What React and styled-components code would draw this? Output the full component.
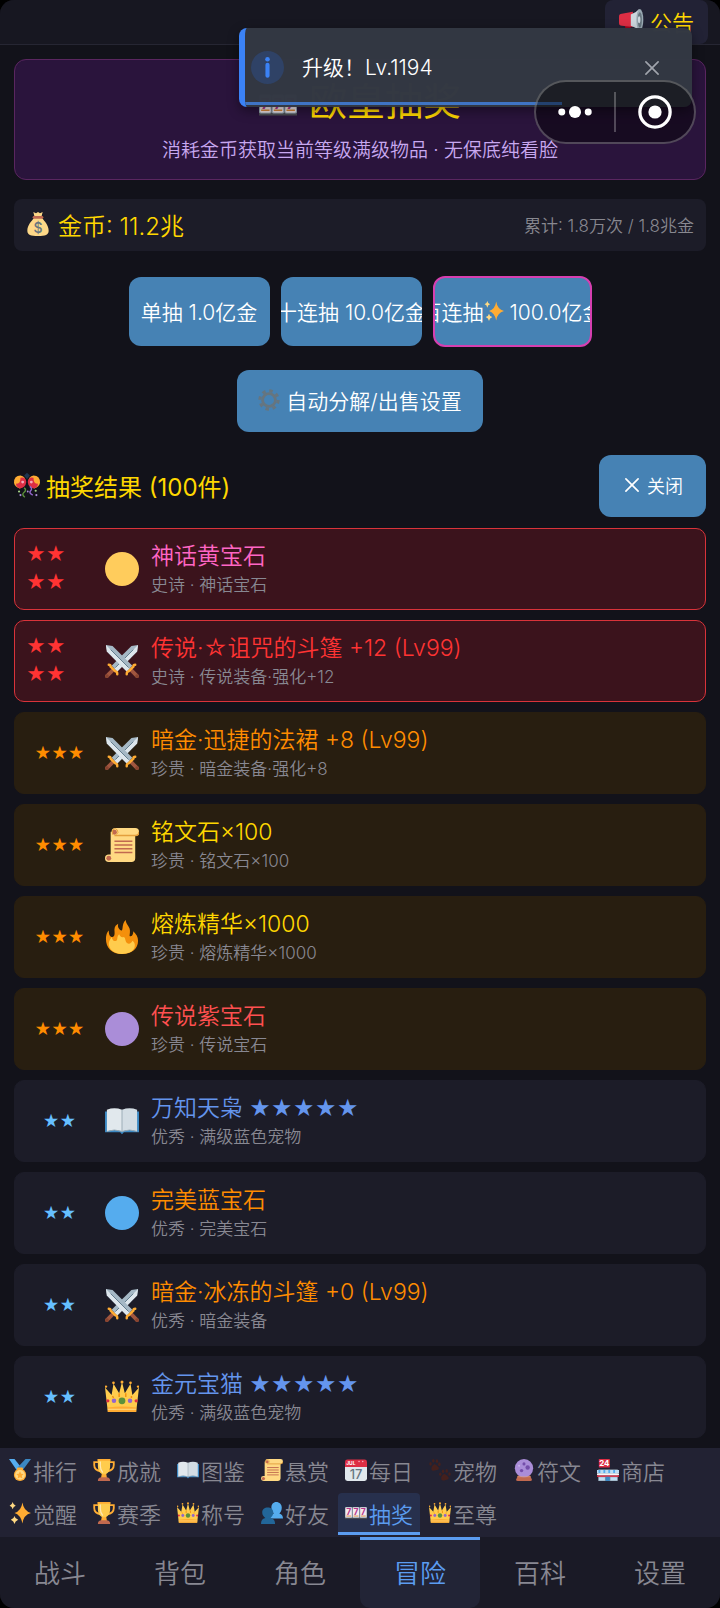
import React from "react";
import styled, { createGlobalStyle, css } from "styled-components";


const GlobalStyle = createGlobalStyle`
 *{
     box-sizing: border-box;
 }
 body{
     margin: 0;
     background: #000;
     color: #fff;
     font-family: Inter, "Noto Sans CJK SC", sans-serif;
     font-weight: 350;
 }
 button{
     font: inherit;
     color: inherit;
     border: 0;
     margin: 0;
     padding: 0;
     background: none;
     cursor: pointer;
 }
`

const sword = <>
    <path d="M1 1l7 1 21 21-6 6L2 8z" fill="#a5b8c5" />
    <path d="M1 1l1 7 21 21 3-3z" fill="#dde6ec" />
    <path d="M6 6l19 19" stroke="#5d7889" strokeWidth="1" />
    <path d="M28 28l6 6" stroke="#a0563f" strokeWidth="4" strokeLinecap="round" />
    <path d="M23 32q0-3 2-3l5-5q0-2 2-2" fill="none" stroke="#ffac33" strokeWidth="2.600" strokeLinecap="round" />
    <circle cx="34" cy="34" r="2" fill="#87432f" />
</>

const cards = [1, 13, 25]

const drawings = {
    swords: <>
        <g transform="translate(36 0) scale(-1 1)">{sword}</g>
        <g>{sword}</g>
    </>,
    scroll: <>
        <path d="M7 4q0-4 4-4h21q4 0 4 4t-4 4v24q0 4-4 4H4q-4 0-4-4t4-4h2V4z" fill="#ffd983" />
        <path d="M10 8h22q4 0 4-4" fill="none" stroke="#e39f3d" strokeWidth="1.500" />
        <circle cx="10" cy="4.500" r="2.600" fill="#c1694f" />
        <path d="M8 7V2q3-3 5 0t-1 5" fill="none" stroke="#e39f3d" />
        <circle cx="4" cy="32" r="2.600" fill="#c1694f" />
        <path d="M10 14h19M10 18h19M10 22h19M10 26h19" stroke="#c1694f" strokeWidth="1.500" />
    </>,
    fire: <>
        <path d="M18 36C7 36 1 29 1 20c0-4 1-7 3-9 0 4 1 7 4 7 3-1 2-5 2-8 0-3 2-5 4-6-1 4 1 6 3 7C20 12 17 4 22 0c0 4 3 6 4 9s0 6 0 8c2 1 4-1 4-5 3 3 5 6 5 10 0 8-6 14-17 14z" fill="#f4900c" />
        <path d="M18 36C9 36 4 31 4 25c0-3 2-5 3-7 1 4 3 5 5 4 2-2 0-4 3-7 1 2 2 4 5 3 2 1 1 4 3 6 2 2 5 1 6-2 3 2 3 5 2 8-2 4-7 6-13 6z" fill="#ffcc4d" />
    </>,
    book: <>
        <path d="M0 8h3l14 3h2l14-3h3v22H20l-2 2-2-2H0z" fill="#3b88c3" />
        <path d="M2 6q8-3 16 0v23q-8-3-16 0z" fill="#e1e8ed" />
        <path d="M34 6q-8-3-16 0v23q8-3 16 0z" fill="#d3dde4" />
        <path d="M18 6v23M2 29q8-3 16 0 8-3 16 0" fill="none" stroke="#99aab5" />
    </>,
    crown: <>
        <path d="M3 34L0 8l7 8 2-12 6 10 3-12 3 12 6-10 2 12 7-8-3 26z" fill="#ffcc4d" />
        <path d="M3 29q15-2 30 0v5H3z" fill="#ffac33" />
        <path d="M3 31h30" stroke="#ffe08a" />
        <path d="M8 17l1 2M15 14v4M22 14v4M28 17v2" stroke="#f4900c" strokeWidth="1.500" />
        <g fill="#ffac33"><circle cx="1" cy="7" r="1.300" /><circle cx="9" cy="3" r="1.400" /><circle cx="18" cy="2" r="1.600" /><circle cx="27" cy="3" r="1.400" /><circle cx="35" cy="7" r="1.300" /></g>
        <circle cx="18" cy="22" r="3.600" fill="#5c913b" />
        <circle cx="9.500" cy="22" r="2.400" fill="#9266cc" />
        <circle cx="26.500" cy="22" r="2.400" fill="#9266cc" />
        <circle cx="3" cy="22" r="1.700" fill="#dd2e44" />
        <circle cx="33" cy="22" r="1.700" fill="#dd2e44" />
    </>,
    medal: <>
        <path d="M0 0h9l11 14-7 5z" fill="#55acee" />
        <path d="M36 0h-9L14 14l8 5z" fill="#3b88c3" />
        <rect x="13" y="14" width="10" height="5" rx="2" fill="#ffac33" />
        <circle cx="18" cy="26" r="10" fill="#ffac33" />
        <circle cx="18" cy="26" r="8" fill="#ffd983" />
        <path d="M18 20l2 4 4 .5-3 3 1 4.500-4-2-4 2 1-4.500-3-3 4-.5z" fill="#ffac33" />
    </>,
    trophy: <>
        <path d="M9 5H2v5c0 6 4 9 10 10M27 5h7v5c0 6-4 9-10 10" fill="none" stroke="#ffac33" strokeWidth="3" />
        <path d="M15 21h6l2 11H13z" fill="#ffac33" />
        <path d="M8 1h20v10c0 9-4 14-10 14S8 20 8 11z" fill="#ffcc4d" />
        <path d="M12 4v7c0 5 1 8 4 11" fill="none" stroke="#ffe8b6" strokeWidth="2" />
        <rect x="7" y="0" width="22" height="3" rx="1.500" fill="#ffac33" />
        <path d="M8 36q0-6 6-6h8q6 0 6 6z" fill="#c1694f" />
    </>,
    calendar: <>
        <path d="M0 8h36v24q0 4-4 4H4q-4 0-4-4z" fill="#e1e8ed" />
        <path d="M4 1h28q4 0 4 4v8H0V5q0-4 4-4z" fill="#dd2e44" />
        <circle cx="23" cy="4" r="1.300" fill="#f4abba" />
        <circle cx="29" cy="4" r="1.300" fill="#f4abba" />
        <text x="2" y="10" fontSize="8" fontWeight="700" fill="#fff">JUL</text>
        <text x="18" y="32" fontSize="21" fontWeight="500" textAnchor="middle" fill="#66757f">17</text>
    </>,
    paws: <>
        <g fill="#45201c">
            <path d="M9 8q5 3 7 6 1 4-3 4l-4 1q-4 1-5-2-1-5 5-9z" />
            <ellipse cx="2.500" cy="8" rx="2" ry="3" /><ellipse cx="7" cy="3" rx="2" ry="3" />
            <ellipse cx="13" cy="3.500" rx="2" ry="3" /><ellipse cx="17" cy="8.500" rx="2" ry="3" />
            <path d="M25 24q5 3 7 6 1 4-3 4l-4 1q-4 1-5-2-1-5 5-9z" />
            <ellipse cx="18.500" cy="25" rx="2" ry="3" /><ellipse cx="23" cy="20" rx="2" ry="3" />
            <ellipse cx="29" cy="19.500" rx="2" ry="3" /><ellipse cx="33.500" cy="24.500" rx="2" ry="3" />
        </g>
    </>,
    ball: <>
        <path d="M8 27h20l3 7q0 2-3 2H8q-3 0-3-2z" fill="#c1694f" />
        <circle cx="18" cy="15" r="15" fill="#aa8dd8" />
        <circle cx="18" cy="8" r="2.500" fill="#744eaa" />
        <circle cx="24" cy="14" r="3.600" fill="#744eaa" />
        <circle cx="14" cy="19" r="2.800" fill="#744eaa" />
        <circle cx="10" cy="11" r="1.700" fill="#c6b0e8" />
        <path d="M7 29h22" stroke="#e39f7a" />
    </>,
    store: <>
        <rect x="3" y="0" width="18" height="14" rx="1" fill="#dd2e44" />
        <text x="12" y="12" fontSize="13" fontWeight="700" textAnchor="middle" fill="#fff">24</text>
        <rect x="2" y="17" width="32" height="19" fill="#8899a6" />
        <path d="M0 18h36v5H0z" fill="#bdddf4" />
        <path d="M4 18v5M12 18v5M20 18v5M28 18v5" stroke="#55acee" strokeWidth="3" />
        <path d="M0 25h36" stroke="#f5f8fa" strokeWidth="3" />
        <path d="M0 28h36" stroke="#dd2e44" strokeWidth="2.500" />
        <path d="M3 30h10v5H3zM22 30h11v5H22z" fill="#bdddf4" />
        <path d="M14 29h7v7h-7z" fill="#3b88c3" />
    </>,
    sparkles: <>
        <path d="M22 1q2 14 14 17-12 3-14 17Q19 21 9 18 20 15 22 1z" fill="#ffac33" />
        <path d="M6 0q1 5 5 6-4 1-5 6Q5 7 1 6q4-1 5-6zM9 23q1 5 6 6-5 2-6 7-1-5-6-7 5-1 6-6z" fill="#ffd983" />
    </>,
    people: <>
        <path d="M15 27c0-5 3-7 6-8-3-4-4-6-4-10 0-5 3-9 8-9s9 4 9 9c0 5-2 8-4 10 4 1 6 4 6 8z" fill="#55acee" />
        <path d="M0 36c0-6 2-9 7-10-3-3-5-5-5-9 0-5 4-8 9-8s9 3 9 8c0 4-2 7-5 9 6 1 8 4 8 10z" fill="#226699" />
    </>,
    slots: <>
        <rect x="0" y="24" width="36" height="4" fill="#4a4a50" />
        {cards.map((x) => <g key={x}>
            <rect x={x - 1} y="8" width="12" height="18" rx="1.500" fill="#99aab5" />
            <rect x={x} y="9" width="10" height="16" rx="1" fill="#f5e9ee" />
            <text x={x + 5} y="22" fontSize="14" fontWeight="700" textAnchor="middle" fill="#b5388c">7</text>
            <path d={`M${x + 1} 23h8`} stroke="#d98a3d" strokeWidth="1.500" />
        </g>)}
    </>,
    megaphone: <>
        <path d="M8 20h8l2 14q-4 4-8 0z" fill="#a0041e" />
        <path d="M0 11q0-4 4-4l16-3v22L4 24q-4 0-4-4z" fill="#dd2e44" />
        <path d="M17 8q7-2 12-8v31q-5-5-12-7z" fill="#ccd6dd" />
        <ellipse cx="30" cy="15.500" rx="5" ry="15.500" fill="#9aaab4" />
        <ellipse cx="30" cy="15.500" rx="3" ry="11" fill="#66757f" />
        <ellipse cx="29" cy="15.500" rx="1.800" ry="5" fill="#ccd6dd" />
    </>,
    bag: <>
        <path d="M11 0l4 2 3-2 3 2 4-2-2 8H13z" fill="#fdd888" />
        <path d="M12 9h12c4 5 10 11 10 19 0 6-5 8-16 8S2 34 2 28C2 20 8 14 12 9z" fill="#fdd888" />
        <rect x="10" y="6" width="16" height="4" rx="2" fill="#bf6952" />
        <text x="18" y="31" fontSize="21" fontWeight="500" textAnchor="middle" fill="#67757f">$</text>
    </>,
    gear: <>
        <circle cx="18" cy="18" r="10.500" fill="none" stroke="#66757f" strokeWidth="4.500" />
        <circle cx="18" cy="18" r="15" fill="none" stroke="#66757f" strokeWidth="5" strokeDasharray="5.600 6.180" />
    </>,
    confetti: <>
        <path d="M18 10L14 5l4-4 4 4z" fill="#1d3550" />
        <path d="M0 15Q0 5 9 5q7 1 7 9-2 7-8 9-7-2-8-8z" fill="#ffac33" />
        <path d="M36 15Q36 5 27 5q-7 1-7 9 2 7 8 9 7-2 8-8z" fill="#ffac33" />
        <path d="M9 8q7-2 8 6-1 8-9 9-6-3-5-7 6 1 6-8z" fill="#dd2e44" />
        <path d="M27 8q-7-2-8 6 1 8 9 9 6-3 5-7-6 1-6-8z" fill="#dd2e44" />
        <circle cx="12" cy="14" r="2" fill="#f4abba" />
        <circle cx="24" cy="14" r="2" fill="#f4abba" />
        <path d="M14 22q4 3 0 6t1 7" fill="none" stroke="#5c913b" strokeWidth="2" />
        <path d="M22 20q4 3 1 6t3 6" fill="none" stroke="#9266cc" strokeWidth="2" />
        <g fill="#a6d388"><circle cx="7" cy="27" r="1.500" /><circle cx="30" cy="26" r="1.500" /></g>
        <g fill="#aa8dd8"><circle cx="9" cy="32" r="1.500" /><circle cx="31" cy="32" r="1.500" /><circle cx="19" cy="27" r="1.300" /></g>
    </>,
    yellowGem: <circle cx="18" cy="18" r="18" fill="#ffcc5c" />,
    purpleGem: <circle cx="18" cy="18" r="18" fill="#aa8dd8" />,
    blueGem: <circle cx="18" cy="18" r="18" fill="#55acee" />,
    cross: <path d="M7 7l22 22M29 7L7 29" stroke="currentColor" strokeWidth="3" fill="none" strokeLinecap="round" />,
    info: <>
        <circle cx="18" cy="18" r="18" fill="#2f4266" />
        <circle cx="18" cy="9" r="2.500" fill="#3b82f6" />
        <path d="M18 15v12" stroke="#3b82f6" strokeWidth="4.500" strokeLinecap="round" />
    </>,
    dots: <g fill="#fff"><circle cx="4" cy="18" r="3.700" /><circle cx="18" cy="18" r="6.400" /><circle cx="32" cy="18" r="3.700" /></g>,
    target: <>
        <circle cx="18" cy="18" r="16" fill="none" stroke="#fff" strokeWidth="3.500" />
        <circle cx="18" cy="18" r="7" fill="#fff" />
    </>,
}

const Icon = ({ name, size }) => {
    return <Svg viewBox="0 0 36 36" width={size} height={size} aria-hidden="true">{drawings[name]}</Svg>
}


const results = [
    { rank: "epic", stars: 4, icon: "yellowGem", name: "神话黄宝石", color: "#ff66c4", note: "史诗 · 神话宝石" },
    { rank: "epic", stars: 4, icon: "swords", name: "传说·☆诅咒的斗篷 +12 (Lv99)", color: "#ff3333", note: "史诗 · 传说装备·强化+12" },
    { rank: "rare", stars: 3, icon: "swords", name: "暗金·迅捷的法裙 +8 (Lv99)", color: "#ff8c00", note: "珍贵 · 暗金装备·强化+8" },
    { rank: "rare", stars: 3, icon: "scroll", name: "铭文石×100", color: "#ffd700", note: "珍贵 · 铭文石×100" },
    { rank: "rare", stars: 3, icon: "fire", name: "熔炼精华×1000", color: "#ffd700", note: "珍贵 · 熔炼精华×1000" },
    { rank: "rare", stars: 3, icon: "purpleGem", name: "传说紫宝石", color: "#ff5050", note: "珍贵 · 传说宝石" },
    { rank: "good", stars: 2, icon: "book", name: "万知天枭", pet: "★★★★★", color: "#6495ed", note: "优秀 · 满级蓝色宠物" },
    { rank: "good", stars: 2, icon: "blueGem", name: "完美蓝宝石", color: "#ff8c00", note: "优秀 · 完美宝石" },
    { rank: "good", stars: 2, icon: "swords", name: "暗金·冰冻的斗篷 +0 (Lv99)", color: "#ff8c00", note: "优秀 · 暗金装备" },
    { rank: "good", stars: 2, icon: "crown", name: "金元宝猫", pet: "★★★★★", color: "#6495ed", note: "优秀 · 满级蓝色宠物" },
]

const subTabs = [
    ["medal", "排行"], ["trophy", "成就"], ["book", "图鉴"], ["scroll", "悬赏"],
    ["calendar", "每日"], ["paws", "宠物"], ["ball", "符文"], ["store", "商店"],
    ["sparkles", "觉醒"], ["trophy", "赛季"], ["crown", "称号"], ["people", "好友"],
    ["slots", "抽奖"], ["crown", "至尊"],
]

const tabs = ["战斗", "背包", "角色", "冒险", "百科", "设置"]


const App = () => {
    return <Page>
        <GlobalStyle />
        <TopBar>
            <Notice><Icon name="megaphone" size={25} />公告</Notice>
        </TopBar>

        <Main>
            <Banner>
                <Title><Icon name="slots" size={38} />欧皇抽奖</Title>
                <Subtitle>消耗金币获取当前等级满级物品 · 无保底纯看脸</Subtitle>
            </Banner>

            <Wallet>
                <Coins><Icon name="bag" size={24} />金币: 11.2兆</Coins>
                <Total>累计: 1.8万次 / 1.8兆金</Total>
            </Wallet>

            <DrawRow>
                <DrawButton>单抽 1.0亿金</DrawButton>
                <DrawButton>十连抽 10.0亿金</DrawButton>
                <DrawButton $special>百连抽<Icon name="sparkles" size={20} />&nbsp;100.0亿金</DrawButton>
            </DrawRow>

            <SettingsButton><Icon name="gear" size={22} />自动分解/出售设置</SettingsButton>

            <ResultHead>
                <ResultTitle><Icon name="confetti" size={26} />抽奖结果 (100件)</ResultTitle>
                <CloseButton><Icon name="cross" size={20} />关闭</CloseButton>
            </ResultHead>

            <ResultList>
                {results.map((item) => <Result key={item.name} $rank={item.rank}>
                    <Stars $rank={item.rank}>{"★".repeat(item.stars)}</Stars>
                    <Icon name={item.icon} size={34} />
                    <Info>
                        <Name $color={item.color}>{item.name}{item.pet && <PetStars> {item.pet}</PetStars>}</Name>
                        <Note>{item.note}</Note>
                    </Info>
                </Result>)}
            </ResultList>
        </Main>

        <SubNav>
            {subTabs.map(([icon, label]) => <SubTab key={label} $active={label === "抽奖"}>
                <Icon name={icon} size={22} />{label}
            </SubTab>)}
        </SubNav>

        <BottomNav>
            {tabs.map((label) => <Tab key={label} $active={label === "冒险"}>{label}</Tab>)}
        </BottomNav>

        <Toast role="status">
            <Icon name="info" size={33} />
            <Message>升级！Lv.1194</Message>
            <Dismiss aria-label="关闭提示"><Icon name="cross" size={20} /></Dismiss>
            <Progress />
        </Toast>

        <Capsule>
            <CapsuleButton aria-label="更多"><Icon name="dots" size={34} /></CapsuleButton>
            <CapsuleButton aria-label="退出"><Icon name="target" size={34} /></CapsuleButton>
        </Capsule>
    </Page>
}


export default App


const Svg = styled.svg`
 flex: none;
 display: block;
`

const Page = styled.div`
 position: relative;
 min-height: 100vh;
 display: flex;
 flex-direction: column;
 background: #12121a;
 border-radius: 14px;
 overflow: hidden;
`

const TopBar = styled.header`
 height: 45px;
 padding: 0 12px;
 display: flex;
 justify-content: flex-end;
 background: #171721;
 border-bottom: 1px solid #262633;
`

const Notice = styled.button`
 padding: 0 14px 2px;
 display: flex;
 align-items: center;
 gap: 6px;
 border-radius: 8px;
 background: #222235;
 color: #ffd700;
 font-size: 22px;
`

const Main = styled.main`
 flex: 1;
 padding: 14px 14px 10px;
 display: flex;
 flex-direction: column;
`

const Banner = styled.section`
 padding: 17px 16px 15px;
 display: flex;
 flex-direction: column;
 align-items: center;
 gap: 12px;
 border: 1px solid #5a2660;
 border-radius: 12px;
 background: #2a143c;
 margin-bottom: 19px;
`

const Title = styled.h1`
 margin: 0;
 display: flex;
 align-items: center;
 gap: 12px;
 color: #ffd700;
 font-size: 38px;
 font-weight: 400;
 line-height: 48px;
 & > svg{
     margin-top: 8px;
 }
`

const Subtitle = styled.p`
 margin: 0;
 color: #c8a8f0;
 font-size: 19px;
 line-height: 27px;
`

const Wallet = styled.section`
 height: 52px;
 padding: 0 12px 2px;
 display: flex;
 align-items: center;
 justify-content: space-between;
 border-radius: 8px;
 background: #1c1c28;
 margin-bottom: 25px;
`

const Coins = styled.span`
 display: flex;
 align-items: center;
 gap: 8px;
 color: #ffd700;
 font-size: 24px;
`

const Total = styled.span`
 color: #888890;
 font-size: 17px;
`

const DrawRow = styled.div`
 display: flex;
 align-items: center;
 justify-content: center;
 gap: 11px;
 margin-bottom: 23px;
`

const buttonBase = css`
 padding-bottom: 2px;
 display: flex;
 align-items: center;
 justify-content: center;
 border-radius: 12px;
 background: #4682b4;
 font-size: 21px;
 white-space: nowrap;
`

const DrawButton = styled.button`
 ${buttonBase}
 width: ${(props) => props.$special ? 159 : 141}px;
 height: ${(props) => props.$special ? 71 : 69}px;
 border: ${(props) => props.$special ? "2px solid #d63fb0" : "0"};
 overflow: hidden;
`

const SettingsButton = styled.button`
 ${buttonBase}
 align-self: center;
 height: 62px;
 padding: 0 21px 2px;
 gap: 6px;
 margin-bottom: 23px;
`

const ResultHead = styled.div`
 display: flex;
 align-items: center;
 justify-content: space-between;
 margin-bottom: 11px;
`

const ResultTitle = styled.h2`
 margin: 0;
 padding-bottom: 2px;
 display: flex;
 align-items: center;
 gap: 6px;
 color: #ffd700;
 font-size: 24px;
 font-weight: 400;
`

const CloseButton = styled.button`
 ${buttonBase}
 height: 62px;
 padding: 0 23px 2px;
 gap: 5px;
 font-size: 18px;
`

const ResultList = styled.ul`
 margin: 0;
 padding: 0;
 display: flex;
 flex-direction: column;
 gap: 10px;
 list-style: none;
`

const ranks = {
    epic: { color: "#ff3333", border: "#d9333a", background: "#3b131c" },
    rare: { color: "#ff8c00", border: "#281e10", background: "#281e10" },
    good: { color: "#66bfff", border: "#1c1c28", background: "#1c1c28" },
}

const Result = styled.li`
 min-height: 82px;
 padding: 11px;
 display: flex;
 align-items: center;
 gap: 12px;
 border: 1px solid ${(props) => ranks[props.$rank].border};
 border-radius: 10px;
 background: ${(props) => ranks[props.$rank].background};
`

const Stars = styled.div`
 width: 67px;
 text-align: center;
 word-break: break-all;
 color: ${(props) => ranks[props.$rank].color};
 font-size: 16px;
 line-height: 28px;
 ${(props) => props.$rank === "epic" && css`
  padding-right: 14px;
  text-align: left;
  font-size: 19px;
 `}
`

const Info = styled.div`
 flex: 1;
 min-width: 0;
`

const Name = styled.div`
 color: ${(props) => props.$color};
 font-size: 23px;
 line-height: 32px;
`

const PetStars = styled.span`
 font-size: 21px;
 line-height: 1;
`

const Note = styled.div`
 color: #888892;
 font-size: 17px;
 line-height: 26px;
`

const SubNav = styled.nav`
 padding: 2px;
 display: flex;
 flex-wrap: wrap;
 gap: 1px 2px;
 background: #222233;
`

const SubTab = styled.button`
 height: 42px;
 padding: 0 7px;
 display: flex;
 align-items: center;
 gap: 2px;
 border-bottom: 3px solid ${(props) => props.$active ? "#5b9cf0" : "transparent"};
 border-radius: 4px 4px 0 0;
 background: ${(props) => props.$active ? "#27304d" : "none"};
 color: ${(props) => props.$active ? "#5b9cf0" : "#888892"};
 font-size: 22px;
`

const BottomNav = styled.nav`
 display: grid;
 grid-template-columns: repeat(6, 1fr);
 background: #1a1a26;
`

const Tab = styled.button`
 height: 71px;
 padding-bottom: 5px;
 border-top: 3px solid ${(props) => props.$active ? "#5b9cf0" : "transparent"};
 border-radius: 0 0 10px 10px;
 background: ${(props) => props.$active ? "#222436" : "none"};
 color: ${(props) => props.$active ? "#5b9cf0" : "#888892"};
 font-size: 26px;
`

const Toast = styled.div`
 position: absolute;
 top: 28px;
 right: 28px;
 width: 453px;
 max-width: calc(100% - 56px);
 height: 79px;
 padding: 0 28px 0 6px;
 display: flex;
 align-items: center;
 gap: 18px;
 border-left: 6px solid #3b82f6;
 border-radius: 8px;
 background: #323743fd;
 box-shadow: 0 4px 12px #00000066;
 overflow: hidden;
`

const Message = styled.span`
 flex: 1;
 padding-bottom: 3px;
 font-size: 21px;
`

const Dismiss = styled.button`
 padding: 2px;
 color: #a0a4ac;
`

const Progress = styled.div`
 position: absolute;
 left: 0;
 bottom: 2px;
 width: 71%;
 height: 3px;
 background: #3f74c4;
`

const Capsule = styled.div`
 position: absolute;
 top: 80px;
 right: 24px;
 width: 162px;
 height: 64px;
 display: flex;
 align-items: center;
 border: 2px solid #ffffff40;
 border-radius: 32px;
 background: #00000070;
`

const CapsuleButton = styled.button`
 flex: 1;
 height: 40px;
 display: flex;
 align-items: center;
 justify-content: center;
 & + &{
     border-left: 2px solid #ffffff40;
 }
`
